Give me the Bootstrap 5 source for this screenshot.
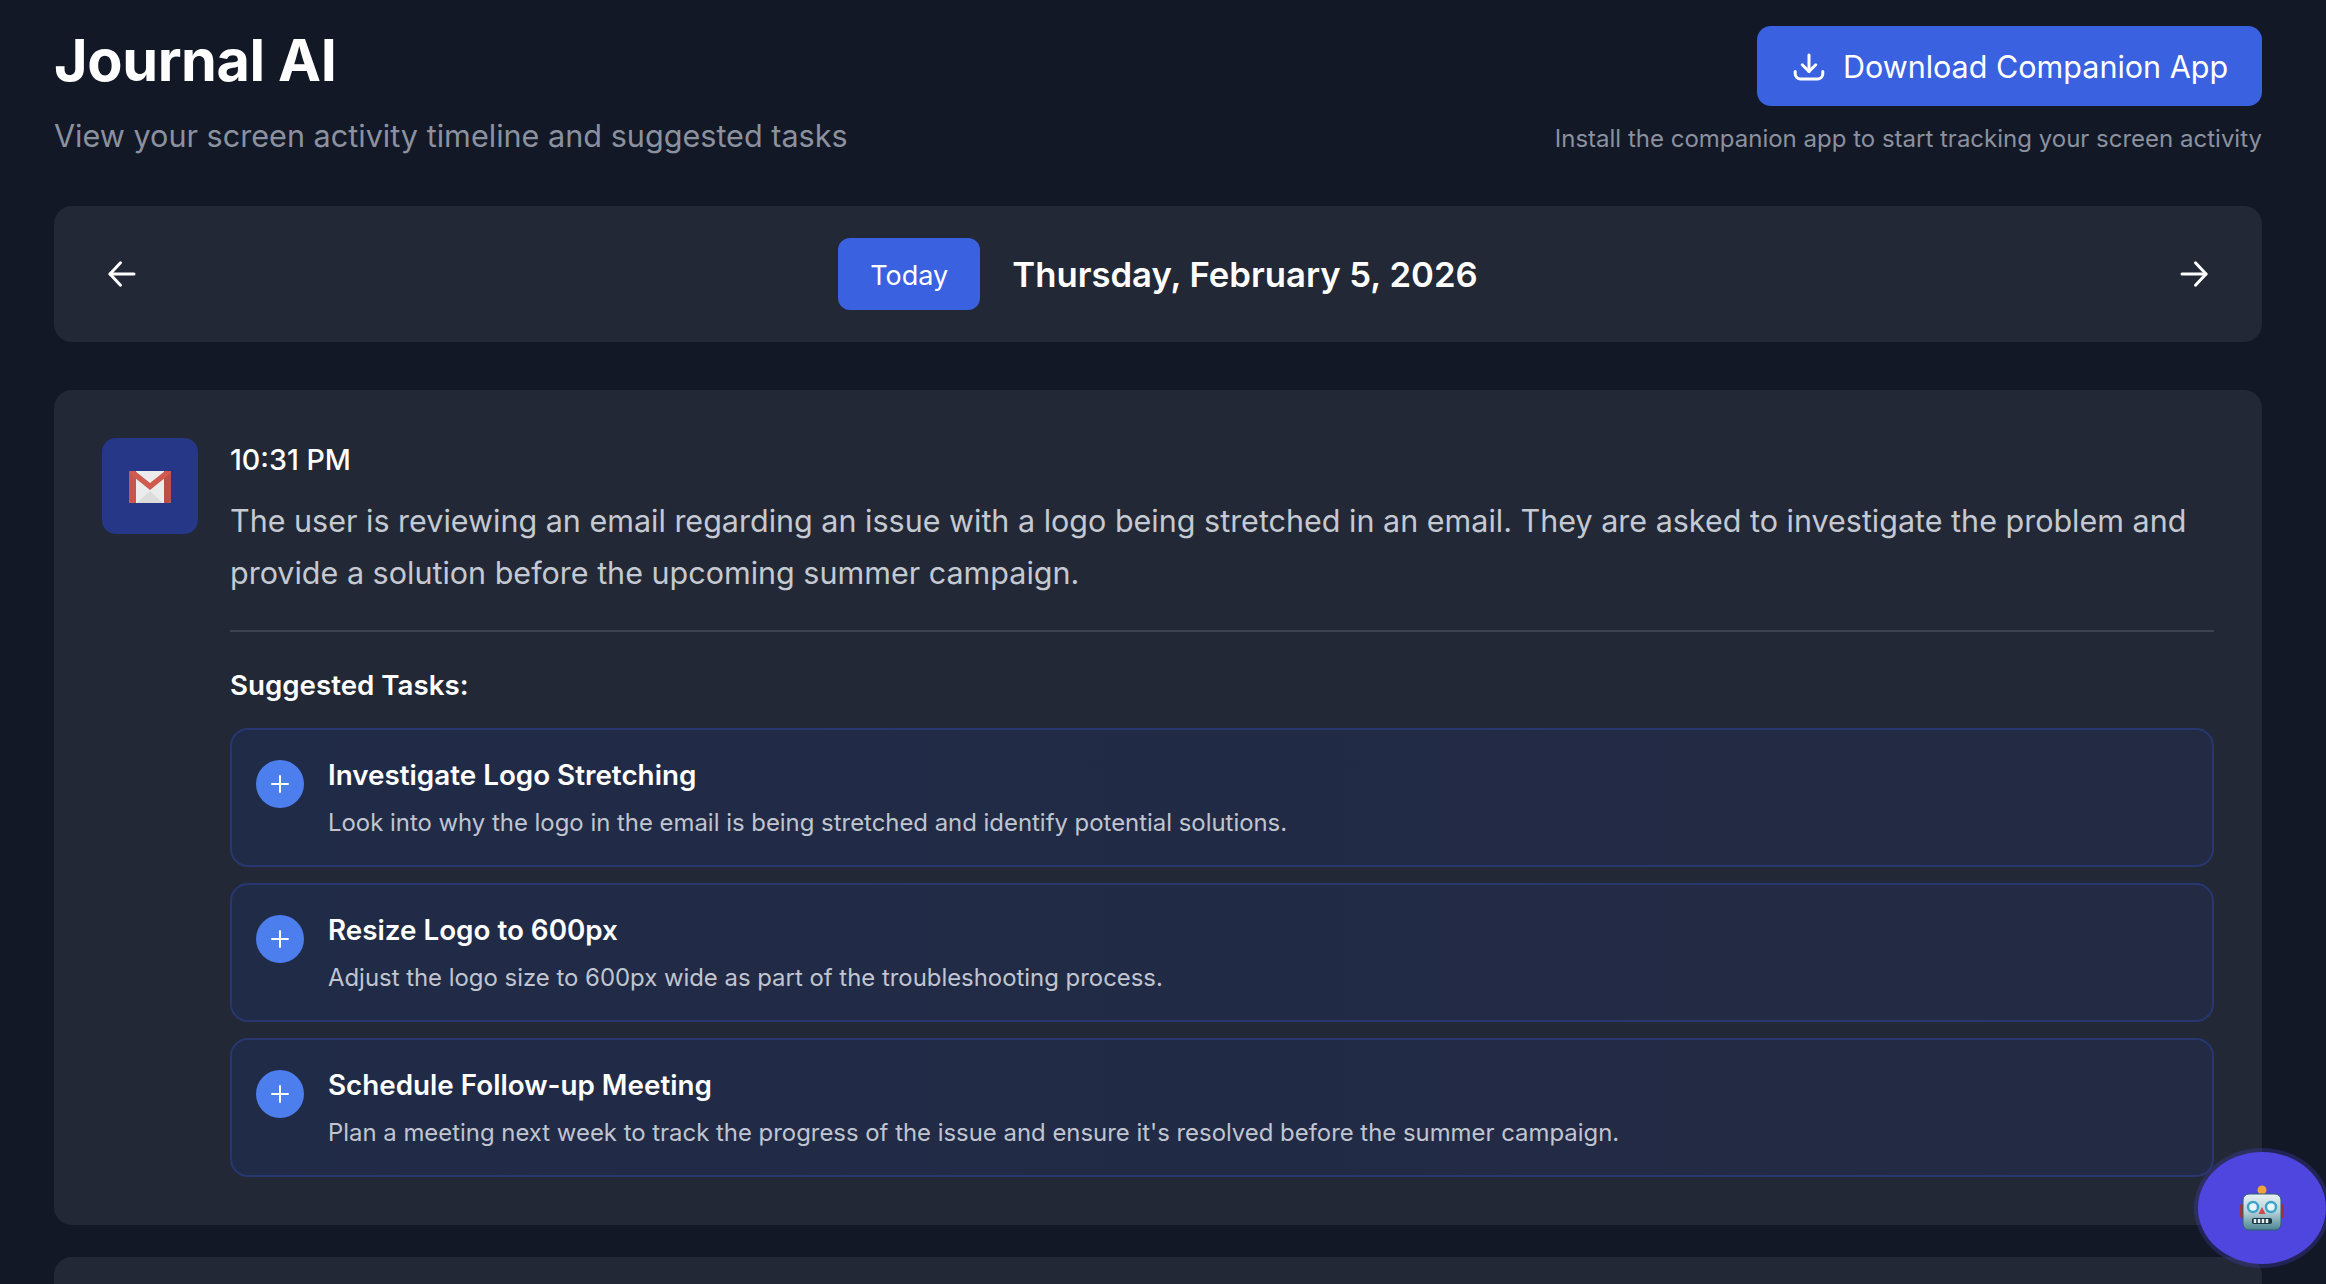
<!DOCTYPE html>
<html lang="en">
<head>
  <meta charset="UTF-8">
  <meta name="viewport" content="width=device-width, initial-scale=1.0">
  <title>Journal AI</title>
  <link href="https://cdn.jsdelivr.net/npm/bootstrap@5.3.2/dist/css/bootstrap.min.css" rel="stylesheet">
  <script src="https://cdn.jsdelivr.net/npm/bootstrap@5.3.2/dist/js/bootstrap.bundle.min.js"></script>
  <style>
    html, body {
      height: 100%;
      overflow: hidden;
    }
    body {
      background-color: #121826;
      font-family: Inter, "Liberation Sans", sans-serif;
      color: #fff;
    }
    .page-wrap {
      padding: 26px 64px 0 54px;
    }
    .app-title {
      font-size: 57.6px;
      font-weight: 700;
      line-height: 68px;
      margin: 0 0 19.5px;
      letter-spacing: -0.4px;
    }
    .app-sub {
      font-size: 30.6px;
      line-height: 44px;
      color: #8b919e;
      margin: 0;
    }
    .btn-download {
      height: 80px;
      width: 505px;
      border-radius: 14px;
      background: #3a61e0;
      color: #fff;
      font-size: 30.5px;
      border: 0;
      padding: 6px 12px 4px;
    }
    .hint-text {
      font-size: 24px;
      line-height: 36px;
      color: #8b919e;
      margin: 15px 0 0;
    }
    .date-bar {
      height: 136px;
      margin-top: 48px;
      padding: 0 50px;
      background: #222835;
      border-radius: 18px;
    }
    .btn-today {
      height: 72px;
      width: 142px;
      border-radius: 12px;
      background: #3a61e0;
      color: #fff;
      font-size: 27px;
      border: 0;
      padding: 9px 12px 4px;
    }
    .date-label {
      font-size: 34.7px;
      font-weight: 600;
      padding-top: 1px;
    }
    .entry-card {
      background: #222835;
      border-radius: 18px;
      padding: 48px;
      margin-top: 48px;
    }
    .entry-card-next {
      height: 27px;
      padding: 0;
      margin-top: 32px;
      border-radius: 18px 18px 0 0;
    }
    .app-icon {
      width: 96px;
      height: 96px;
      border-radius: 14px;
      background: #253786;
      padding-top: 2px;
    }
    .entry-time {
      font-size: 28.6px;
      line-height: 40px;
      font-weight: 450;
      margin-top: 2px;
    }
    .entry-text {
      font-size: 30.5px;
      line-height: 52px;
      color: #c5c9d2;
      margin: 15.5px 0 0;
    }
    .entry-rule {
      height: 2px;
      background: #3d434f;
      margin: 30.5px 0 33.5px;
    }
    .tasks-label {
      font-size: 27.7px;
      line-height: 40px;
      font-weight: 600;
      margin-bottom: 22.5px;
    }
    .task-row {
      height: 139px;
      padding: 28px 24px;
      background: linear-gradient(90deg, #202b47, #232a44);
      border: 2px solid #28376f;
      border-radius: 18px;
    }
    .task-add {
      width: 48px;
      height: 48px;
      background: #4d7eee;
      border-radius: 50%;
      margin-top: 2px;
    }
    .task-title {
      font-size: 27.8px;
      line-height: 40px;
      font-weight: 600;
      margin-top: -3px;
    }
    .task-desc {
      font-size: 23.9px;
      line-height: 36px;
      color: #c0c5d0;
      margin-top: 10.5px;
    }
    .robot-fab {
      position: fixed;
      left: 2198px;
      top: 1152px;
      width: 128px;
      height: 112px;
      border-radius: 50%;
      background: #4f46e0;
      box-shadow: 0 0 0 4px rgba(79, 70, 224, .25);
    }
  </style>
</head>
<body>
  <div class="page-wrap">
    <div class="d-flex justify-content-between align-items-start">
      <div>
        <h1 class="app-title">Journal AI</h1>
        <p class="app-sub">View your screen activity timeline and suggested tasks</p>
      </div>
      <div class="d-flex flex-column align-items-end">
        <button class="btn btn-download d-flex align-items-center justify-content-center gap-3">
          <svg width="36" height="36" viewBox="0 0 24 24" fill="none" stroke="#fff" stroke-width="2" stroke-linecap="round" stroke-linejoin="round"><path d="M12 4v11"/><path d="M7.500 10.500 12 15l4.500-4.500"/><path d="M2.800 15v1.500A3.500 3.500 0 0 0 6.300 20h11.400a3.500 3.500 0 0 0 3.500-3.500V15"/></svg>
          <span>Download Companion App</span>
        </button>
        <p class="hint-text">Install the companion app to start tracking your screen activity</p>
      </div>
    </div>

    <div class="date-bar d-flex align-items-center justify-content-between">
      <svg width="36" height="36" viewBox="0 0 24 24" fill="none" stroke="#fff" stroke-width="2" stroke-linecap="round" stroke-linejoin="round"><path d="M20 12H4"/><path d="M11 4.500 4 12l7 7.500"/></svg>
      <div class="d-flex align-items-center date-center">
        <button class="btn btn-today">Today</button>
        <span class="date-label ms-4 ps-2">Thursday, February 5, 2026</span>
      </div>
      <svg width="36" height="36" viewBox="0 0 24 24" fill="none" stroke="#fff" stroke-width="2" stroke-linecap="round" stroke-linejoin="round"><path d="M4 12h16"/><path d="M13 4.500 20 12l-7 7.500"/></svg>
    </div>

    <div class="entry-card d-flex gap-4 align-items-start">
      <div class="app-icon d-flex align-items-center justify-content-center flex-shrink-0 me-2">
        <svg width="44" height="34" viewBox="0 0 44 34">
          <rect x="1" y="1" width="42" height="32" rx="2" fill="#ececec"/>
          <path d="M9 33 22 21 35 33z" fill="#dcdcdc"/>
          <path d="M1 3a2 2 0 0 1 2-2h5v32H3a2 2 0 0 1-2-2z" fill="#c9564b"/>
          <path d="M36 1h5a2 2 0 0 1 2 2v28a2 2 0 0 1-2 2h-5z" fill="#bd5046"/>
          <path d="M1 3l21 17L43 3V1h-6L22 13 7 1H3z" fill="#cf5a4d"/>
        </svg>
      </div>
      <div class="flex-grow-1">
        <div class="entry-time">10:31 PM</div>
        <p class="entry-text">The user is reviewing an email regarding an issue with a logo being stretched in an email. They are asked to investigate the problem and provide a solution before the upcoming summer campaign.</p>
        <div class="entry-rule"></div>
        <div class="tasks-label">Suggested Tasks:</div>
        <div id="task-list" class="d-flex flex-column gap-3"></div>
      </div>
    </div>
    <div class="entry-card entry-card-next"></div>
  </div>

  <div class="robot-fab d-flex align-items-center justify-content-center">
    <svg width="44" height="48" viewBox="0 0 44 48">
      <defs>
        <linearGradient id="robotFace" x1="0" y1="0" x2="0" y2="1">
          <stop offset="0" stop-color="#e8f1f4"/>
          <stop offset="0.5" stop-color="#b4d0d8"/>
          <stop offset="1" stop-color="#4c8490"/>
        </linearGradient>
      </defs>
      <circle cx="22" cy="6" r="4.500" fill="#f0a33c"/>
      <rect x="0" y="20" width="5" height="14" rx="2" fill="#a5303a"/>
      <rect x="39" y="20" width="5" height="14" rx="2" fill="#a5303a"/>
      <rect x="3" y="10" width="38" height="36" rx="6" fill="url(#robotFace)" stroke="#2c5f72"/>
      <circle cx="13" cy="23" r="5" fill="#e8f6fa" stroke="#3ea3c7" stroke-width="2.500"/>
      <circle cx="31" cy="23" r="5" fill="#e8f6fa" stroke="#3ea3c7" stroke-width="2.500"/>
      <path d="M22 23l3.500 7h-7z" fill="#cf4a4e"/>
      <rect x="12" y="34" width="20" height="6" rx="2" fill="#173540"/>
      <path d="M15 35v4M19 35v4M23 35v4M27 35v4" stroke="#f0f0f0" stroke-width="2.500"/>
    </svg>
  </div>

  <script>
    const tasks = [
      ['Investigate Logo Stretching', 'Look into why the logo in the email is being stretched and identify potential solutions.'],
      ['Resize Logo to 600px', 'Adjust the logo size to 600px wide as part of the troubleshooting process.'],
      ['Schedule Follow-up Meeting', "Plan a meeting next week to track the progress of the issue and ensure it's resolved before the summer campaign."]
    ];
    const taskList = document.getElementById('task-list');
    for (const [title, desc] of tasks) {
      const row = document.createElement('div');
      row.className = 'task-row d-flex gap-4 align-items-start';
      row.innerHTML = `
        <div class="task-add d-flex align-items-center justify-content-center flex-shrink-0">
          <svg width="24" height="24" viewBox="0 0 24 24" fill="none" stroke="#fff" stroke-width="2" stroke-linecap="round"><path d="M12 4v16M4 12h16"/></svg>
        </div>
        <div>
          <div class="task-title">${title}</div>
          <div class="task-desc">${desc}</div>
        </div>
      `;
      taskList.appendChild(row);
    }
  </script>
</body>
</html>
